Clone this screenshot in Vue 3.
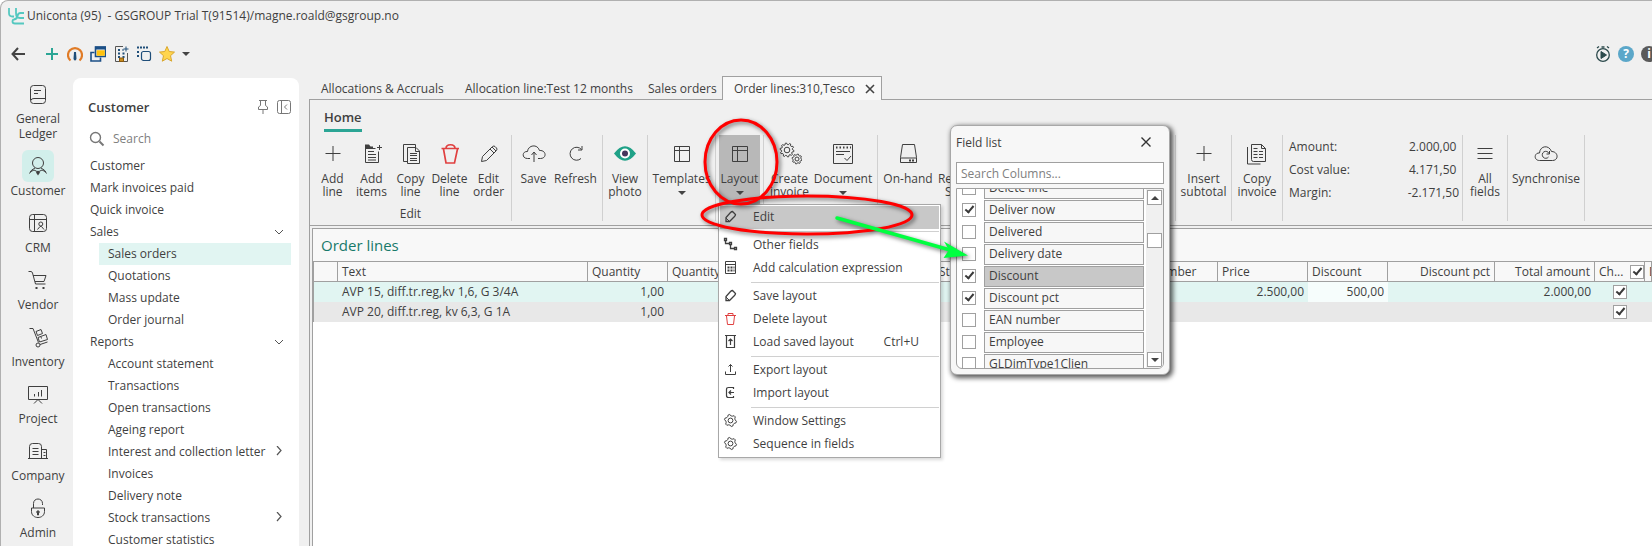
<script setup>
import { ref } from 'vue'

const gear = (cx, cy, r, teeth) => {
  const pts = []
  const n = teeth * 4
  for (let i = 0; i < n; i++) {
    const rad = i % 4 < 2 ? r : r - r * 0.22
    const a = ((i + 0.5) / n) * Math.PI * 2
    pts.push(`${(cx + rad * Math.cos(a)).toFixed(2)} ${(cy + rad * Math.sin(a)).toFixed(2)}`)
  }
  return `<path d="M${pts.join('L')}Z"/><circle cx="${cx}" cy="${cy}" r="${(r * 0.4).toFixed(1)}"/>`
}

const icons = {
  plus: '<path d="M4.500 12.500h15M12 5v15"/>',
  addItems: '<path d="M5.500 5v16.500h13V10.500M5.500 7.500h10M8 10.500h6M8 13.500h8M8 16.500h8M8 19h8M19.500 4v5M17 6.500h5"/><path d="M5 3.500h4l1.500 2H13v2.500H5z" fill="currentColor" stroke="none"/>',
  copy: '<path d="M16.500 6V3.500h-12v17H8M8.500 6.500h8.500l3.500 3.500v12.500h-12zM16.500 6.500v4h4M11 12.500h7M11 14.500h7M11 17.500h7M11 19.500h7"/>',
  trash: '<g stroke="#e04040" stroke-width="1.700"><path d="M3.500 7.500h17.500M8 7.500C8 2.500 17 2.500 17 7.500M5.500 8l2.500 14h8.500L19.500 8"/></g>',
  pencil: '<path d="M4.500 20.500l1-5L15.500 5.500q1.500-1 2.500 0l1.500 1.500q1 1 0 2.500L9.500 19.500zM13 8l4 4M15 6l4 4"/>',
  cloudUp: '<path d="M8 17.500H5.500C-.5 17.500 0 10 5.500 10.500C6 4 15.500 2.500 17.500 9.500C24.500 9 25 17.500 18.500 17.500H16M12 21V11.500M9.500 14L12 11l2.500 3"/>',
  refresh: '<path d="M17 17.500A6.500 6.500 0 1 1 17.500 8.500M18 5v4h-4"/>',
  eye: '<g stroke="none"><path d="M1 12.500Q12-2 23 12.500Q12 27 1 12.500z" fill="#1fa187"/><circle cx="12" cy="12.500" r="5" fill="#fff"/><circle cx="12" cy="12.500" r="3" fill="#46365c"/></g>',
  grid: '<path d="M4.500 5.500h15v15h-15zM4.500 9.500h15M9.500 5.500v15"/>',
  gears: gear(9, 9, 7, 10) + gear(19, 18, 5, 8),
  document: '<path d="M2.500 3.500h19v19h-19zM5 10.500h14M5 13.500h8M13.500 17l2.500 2.500 4-4.500"/><path d="M5 6.500h15" stroke-dasharray="1.500 2" stroke-width="2"/>',
  onHand: '<path d="M6.500 3.500h12l2 13v5h-16v-5zM4.500 17h16"/><path d="M13 19.500h5" stroke-width="2" stroke-dasharray="2 1"/>',
  copyInvoice: '<path d="M6.500 3.500h10l4 4v13h-12q-2 0-2-2zM16.500 3.500v4h4M2.500 6v17h13M8.500 7.500h4M8.500 10.500h4M8.500 13.500h4M14 10.500h4M8.500 16.500h4M14 13.500h4M14 16.500h4"/>',
  menu: '<path d="M4.500 7.500h15M4.500 12.500h15M4.500 17.500h15"/>',
  cloudSync: '<path d="M5.500 19.500C-.5 19.500 0 11.500 5.500 12C6 4.500 15 3.500 17.500 10.500C24.500 10.500 25 19.500 18.500 19.500zM14.500 16A3.500 3.500 0 1 1 15 12.500M15.500 10v3h-3"/>',
  ledger: '<path d="M7.500 3.500h9q3 0 3 3v12q0 3-3 3h-9q-3 0-3-3v-12q0-3 3-3zM5 18.500q0-2 3-2h11.500M8 8.500h7M8 11.500h4"/>',
  person: '<circle cx="12" cy="9" r="5.500"/><path d="M9 14Q5 15.500 3.500 19.500M15 14Q19 15.500 20.500 19.500M4 18l4-2 4 2 4-2 4 2"/><path d="M12 16.500l2 2-2 3-2-3z" fill="currentColor" stroke="none"/>',
  crm: '<rect x="3.500" y="3.500" width="17" height="17" rx="3"/><path d="M3.500 8.500h17M8.500 3.500v17M11.500 18.500l2.500-3h1.500l2.500 3"/><circle cx="14.800" cy="13" r="2"/>',
  cart: '<path d="M2.500 3.500h2.500q1 0 1.500 1.500l3 11h10M7 7.500h13l-2 6H9"/><path d="M9.500 19h2v2h-2zM16.500 19h2v2h-2z" fill="currentColor" stroke="none"/>',
  trolley: '<path d="M3.500 3.500H7l5.500 14M10 6.500l5-2 1.500 4-5 2zM12 12.500l8-3 1.500 5-8 2.500zM14 19.500l7.500-2.500M15 12l.5 1.500"/><circle cx="12" cy="20" r="2"/>',
  board: '<path d="M2.500 4.500h19v13h-19zM8 21.500l4-4 4 4M8.500 12v2.500M12.500 10v4.500M15.500 8v6.500"/>',
  company: '<path d="M3.500 19.500v-12q0-3 3-3h6q3 0 3 3v12M2 19.500h20M15.500 10.500h5v9M6.500 9.500h6M6.500 12.500h6M6.500 15.500h6M17.500 13.500h2M17.500 16.500h2"/>',
  lock: '<path d="M7.500 12V7.500C7.500 1.500 16.500 1.500 16.500 7.500V9M5.500 12h13v3.500C18.500 23.500 5.500 23.500 5.500 15.500z"/><path d="M12 14.500l1.500 1.500-1 1v2h-1v-2l-1-1z" fill="currentColor"/>'
}

const menuIcons = {
  eraser: '<path d="M4 13.500V9.500L8.500 4.500q1-1 2-1l3 3q0 1-1 2L7.500 13.500z" stroke-width="1.300"/><path d="M4 10l3.500 3.500"/>',
  nodes: '<path d="M2.500 2.500h2v2h-2zM7.500 6.500h2v2h-2zM12.500 11.500h2v2h-2zM3.500 4.500v3h4M8.500 8.500v4h4" stroke-width="1.300"/>',
  calc: '<path d="M3.500 2.500h10v12h-10zM3.500 5.500h10"/><path d="M5.500 8.500h7M5.500 11.500h7" stroke-dasharray="2 1" stroke-width="2"/>',
  bin: '<path stroke="#e04040" d="M3 5.500h11M6 5.500v-2h5v2M4.500 6l1 8.500h6l1-8.500"/>',
  load: '<path d="M3 2.500h11M4.500 2.500v12h8v-12M8.500 12V6M6.500 8l2-2 2 2" stroke-width="1.200"/>',
  exp: '<path d="M3.500 10.500v3h10v-3M8.500 11V3.500M6.500 5.500l2-2 2 2"/>',
  imp: '<path d="M11.500 5V3.500h-5q-2 0-2 2v6q0 2 2 2h5V12M12 8.500H7M9 6.500l-2 2 2 2" stroke-width="1.200"/>',
  cog: gear(8.5, 8.5, 6, 6)
}

const rail = [
  { label: 'General\nLedger', icon: 'ledger' },
  { label: 'Customer', icon: 'person', active: true },
  { label: 'CRM', icon: 'crm' },
  { label: 'Vendor', icon: 'cart' },
  { label: 'Inventory', icon: 'trolley' },
  { label: 'Project', icon: 'board' },
  { label: 'Company', icon: 'company' },
  { label: 'Admin', icon: 'lock' }
]

const nav = [
  { t: 'Customer' },
  { t: 'Mark invoices paid' },
  { t: 'Quick invoice' },
  { t: 'Sales', open: true },
  { t: 'Sales orders', sub: true, active: true },
  { t: 'Quotations', sub: true },
  { t: 'Mass update', sub: true },
  { t: 'Order journal', sub: true },
  { t: 'Reports', open: true },
  { t: 'Account statement', sub: true },
  { t: 'Transactions', sub: true },
  { t: 'Open transactions', sub: true },
  { t: 'Ageing report', sub: true },
  { t: 'Interest and collection letter', sub: true, more: true },
  { t: 'Invoices', sub: true },
  { t: 'Delivery note', sub: true },
  { t: 'Stock transactions', sub: true, more: true },
  { t: 'Customer statistics', sub: true }
]

const tabs = [
  { t: 'Allocations & Accruals', w: 144 },
  { t: 'Allocation line:Test 12 months', w: 183 },
  { t: 'Sales orders', w: 86 }
]

const groups = [
  {
    caption: 'Edit', items: [
      { t: 'Add\nline', icon: 'plus', w: 39 },
      { t: 'Add\nitems', icon: 'addItems', w: 39 },
      { t: 'Copy\nline', icon: 'copy', w: 39 },
      { t: 'Delete\nline', icon: 'trash', w: 39 },
      { t: 'Edit\norder', icon: 'pencil', w: 39 }
    ]
  },
  { items: [{ t: 'Save', icon: 'cloudUp', w: 37 }, { t: 'Refresh', icon: 'refresh', w: 47 }] },
  { items: [{ t: 'View\nphoto', icon: 'eye', w: 38 }] },
  { items: [{ t: 'Templates', icon: 'grid', w: 61, drop: true }] },
  { items: [{ t: 'Layout', icon: 'grid', w: 41, drop: true, active: true }] },
  { items: [{ t: 'Create\ninvoice', icon: 'gears', w: 45 }, { t: 'Document', icon: 'document', w: 62, drop: true }] },
  { items: [{ t: 'On-hand', icon: 'onHand', w: 54 }, { t: 'Reserve\nStock', icon: 'copy', w: 50 }, { t: 'Production', icon: 'gears', w: 187 }] },
  { items: [{ t: 'Insert\nsubtotal', icon: 'plus', w: 49 }] },
  { items: [{ t: 'Copy\ninvoice', icon: 'copyInvoice', w: 44 }] },
  { summary: [['Amount:', '2.000,00'], ['Cost value:', '4.171,50'], ['Margin:', '-2.171,50']] },
  { items: [{ t: 'All\nfields', icon: 'menu', w: 38 }] },
  { items: [{ t: 'Synchronise', icon: 'cloudSync', w: 70 }] }
]

const columns = [
  { t: '', w: 24 },
  { t: 'Text', w: 250 },
  { t: 'Quantity', w: 80 },
  { t: 'Quantity', w: 100 },
  { t: '', w: 167 },
  { t: 'Storage', w: 184 },
  { t: 'Item number', w: 99 },
  { t: 'Price', w: 90 },
  { t: 'Discount', w: 80 },
  { t: 'Discount pct', w: 107, r: true },
  { t: 'Total amount', w: 100, r: true },
  { t: 'Ch...', w: 50, check: true },
  { t: 'Date' }
]

const lines = ref([
  { text: 'AVP 15, diff.tr.reg,kv 1,6, G 3/4A', qty: '1,00', price: '2.500,00', disc: '500,00', total: '2.000,00', on: true },
  { text: 'AVP 20, diff.tr.reg, kv 6,3, G 1A', qty: '1,00', price: '', disc: '', total: '', on: true }
])
const allOn = ref(true)

const menu = [
  [{ t: 'Edit', icon: 'eraser', active: true }],
  [{ t: 'Other fields', icon: 'nodes' }, { t: 'Add calculation expression', icon: 'calc' }],
  [{ t: 'Save layout', icon: 'eraser' }, { t: 'Delete layout', icon: 'bin' }, { t: 'Load saved layout', icon: 'load', key: 'Ctrl+U' }],
  [{ t: 'Export layout', icon: 'exp' }, { t: 'Import layout', icon: 'imp' }],
  [{ t: 'Window Settings', icon: 'cog' }, { t: 'Sequence in fields', icon: 'cog' }]
]

const fields = ref([
  { t: 'Delete line', on: false },
  { t: 'Deliver now', on: true },
  { t: 'Delivered', on: false },
  { t: 'Delivery date', on: false },
  { t: 'Discount', on: true, active: true },
  { t: 'Discount pct', on: true },
  { t: 'EAN number', on: false },
  { t: 'Employee', on: false },
  { t: 'GLDimType1Clien', on: false }
])
</script>

<template>
  <div class="window">
    <header class="title">
      <svg width="17" height="17" viewBox="0 0 17 17" fill="none" stroke="#55c8c0" stroke-width="1.800">
        <path d="M1 0v5q0 3.500 3.500 3.500H6M8 0v5q0 5 4 5h4M16 5h-3.500Q10 5 9.500 8T6 11.500Q4.500 11.500 4.500 13.500T7 15.500h9" />
      </svg>
      <span>Uniconta (95)&nbsp; - GSGROUP Trial T(91514)/magne.roald@gsgroup.no</span>
    </header>

    <div class="toolbar">
      <button class="back" aria-label="Back"><svg width="14" height="14" fill="none" stroke="#444" stroke-width="2"><path d="M14 7H1.500M7 1L1.500 7 7 13" /></svg></button>
      <button aria-label="Add"><svg width="16" height="16" fill="none" stroke="#2ba595" stroke-width="2"><path d="M2 8h12M8 2v12" /></svg></button>
      <button aria-label="Dashboard"><svg width="16" height="16" fill="none"><path d="M3.500 14.500A7 7 0 1 1 12.500 14.500" stroke="#e07b26" stroke-width="2.200" /><path d="M7 6h2l.5 7q-1.500 3-3 0z" fill="#1f4e79" /></svg></button>
      <button aria-label="Windows"><svg width="16" height="16" fill="none" stroke="#1b4f86" stroke-width="1.600"><path d="M5.500 1h10v9.500h-10z" /><path d="M5 2h11" stroke-width="3" /><path d="M7.500 5h6.500v4H7.500z" fill="#ffc20e" stroke="#ffc20e" /><path d="M4.500 6.500H1V15h9.500v-3.500" /></svg></button>
      <button aria-label="Company"><svg width="16" height="16" fill="none" stroke="#1f4e79"><path d="M10 .5H2.500v15h12V7" stroke="#555" /><path d="M5 4h2M5 7.500h2M5 11h2M9.500 7.500h2M9.500 11h2M9.500 4h1" stroke-width="2" /><path d="M6.500 12h4v3.500h-4z" fill="#c98a1b" stroke="#8a5a10" /><path d="M13 .5v5M10.500 3h5" /></svg></button>
      <button aria-label="Duplicate"><svg width="16" height="16" fill="none" stroke="#1f4e79"><rect x="5.500" y="5.500" width="9" height="9" rx="2" stroke-width="1.200" /><path d="M1 1.500h11" stroke-width="2" stroke-dasharray="2 1" /><path d="M2 5v7" stroke-width="2" stroke-dasharray="2 2" /></svg></button>
      <button aria-label="Favourites"><svg width="16" height="16"><path d="M8 .5l2.200 5 5.300.6-4 3.600 1.200 5.500L8 12.500l-4.700 2.700 1.200-5.500-4-3.600 5.300-.6z" fill="#ffd54f" stroke="#d9a72e" /></svg></button>
      <button class="drop" aria-label="More favourites"><i class="caret"></i></button>
      <span class="grow"></span>
      <button aria-label="Timer"><svg width="16" height="16" fill="none" stroke="#2c4a4c"><circle cx="8" cy="9" r="6.300" stroke-width="1.300" /><path d="M6 5.500l5.500 3.500L6 12.500z" fill="#2c4a4c" /><path d="M2 2l2-1.500M14 2l-2-1.500M6.500 1h3" stroke-width="1.300" /></svg></button>
      <button class="round" aria-label="Help">?</button>
      <button class="round dark" aria-label="Information">i</button>
    </div>

    <div class="body">
      <nav class="rail">
        <a v-for="r in rail" :key="r.label" href="#" :class="{ on: r.active }">
          <span class="tile"><svg class="ic" viewBox="0 0 24 24" v-html="icons[r.icon]"></svg></span>
          <span class="lbl">{{ r.label }}</span>
        </a>
      </nav>

      <aside class="side">
        <div class="side-head">
          <h2>Customer</h2>
          <button aria-label="Pin"><svg width="14" height="16" fill="none" stroke="#777"><path d="M3 1.500h8M4.500 1.500v5L2.500 8v2.500h9V8l-2-1.500v-5M7 10.500V15" /></svg></button>
          <button aria-label="Collapse"><svg width="16" height="16" fill="none" stroke="#777"><rect x="1.500" y="1.500" width="13" height="13" rx="2" /><path d="M5.500 1.500v13M11 5.500L8.500 8l2.500 2.500" /></svg></button>
        </div>
        <label class="find">
          <svg width="16" height="16" fill="none" stroke="#777" stroke-width="1.400"><circle cx="6.500" cy="6.500" r="5" /><path d="M10.500 10.500l4 4" stroke-width="2" /></svg>
          <input type="text" placeholder="Search" aria-label="Search menu">
        </label>
        <ul>
          <li v-for="n in nav" :key="n.t">
            <a href="#" :class="{ sub: n.sub, on: n.active }">
              <span>{{ n.t }}</span>
              <svg v-if="n.open" width="10" height="10" fill="none" stroke="#555"><path d="M1 3l4 4 4-4" /></svg>
              <svg v-if="n.more" width="10" height="12" fill="none" stroke="#555" stroke-width="1.200"><path d="M3 0l4 4.500L3 9" /></svg>
            </a>
          </li>
        </ul>
      </aside>

      <main>
        <div class="tabs">
          <button v-for="t in tabs" :key="t.t" :style="{ width: t.w + 'px' }">{{ t.t }}</button>
          <button class="on"><span>Order lines:310,Tesco</span><svg width="10" height="10" fill="none" stroke="#444" stroke-width="1.600"><path d="M1 1l8 8M9 1L1 9" /></svg></button>
        </div>
        <div class="pane">
          <section class="ribbon">
            <div class="home"><button>Home</button></div>
            <div class="groups">
              <div v-for="(g, gi) in groups" :key="gi" class="group">
                <dl v-if="g.summary">
                  <div v-for="s in g.summary" :key="s[0]"><dt>{{ s[0] }}</dt><dd>{{ s[1] }}</dd></div>
                </dl>
                <div v-else class="items">
                  <button v-for="i in g.items" :key="i.t" :class="{ on: i.active }" :style="{ width: i.w + 'px' }">
                    <svg class="ic" viewBox="0 0 24 24" v-html="icons[i.icon]"></svg>
                    <span class="lbl">{{ i.t }}</span>
                    <i v-if="i.drop" class="caret"></i>
                  </button>
                </div>
                <p v-if="g.caption">{{ g.caption }}</p>
              </div>
            </div>
          </section>

          <section class="lines">
            <h1>Order lines</h1>
            <table>
              <colgroup><col v-for="(c, i) in columns" :key="i" :style="c.w ? { width: c.w + 'px' } : {}"></colgroup>
              <thead>
                <tr>
                  <th v-for="(c, i) in columns" :key="i" :class="{ r: c.r, chk: c.check }">
                    <label v-if="c.check">{{ c.t }}<input v-model="allOn" type="checkbox"></label>
                    <template v-else>{{ c.t }}</template>
                  </th>
                </tr>
              </thead>
              <tbody>
                <tr v-for="(l, i) in lines" :key="i">
                  <td></td><td>{{ l.text }}</td><td class="r">{{ l.qty }}</td><td></td><td></td><td></td><td></td>
                  <td class="r">{{ l.price }}</td><td class="r" :class="{ focus: i === 0 }">{{ l.disc }}</td><td></td>
                  <td class="r">{{ l.total }}</td>
                  <td class="c"><input v-model="l.on" type="checkbox" :aria-label="'Checked: ' + l.text"></td><td></td>
                </tr>
              </tbody>
            </table>
          </section>
        </div>
      </main>
    </div>

    <div class="menu" role="menu">
      <div v-for="(sec, si) in menu" :key="si" class="sec">
        <button v-for="m in sec" :key="m.t" role="menuitem" :class="{ on: m.active }">
          <svg class="mi" viewBox="0 0 17 17" v-html="menuIcons[m.icon]"></svg>
          <span>{{ m.t }}</span>
          <kbd v-if="m.key">{{ m.key }}</kbd>
        </button>
      </div>
    </div>

    <div class="dialog" role="dialog" aria-label="Field list">
      <div class="dlg-head">
        <span>Field list</span>
        <button aria-label="Close"><svg width="10" height="10" fill="none" stroke="#333" stroke-width="1.400"><path d="M.5 .5l9 9M9.500 .5l-9 9" /></svg></button>
      </div>
      <input class="cols" type="text" placeholder="Search Columns..." aria-label="Search columns">
      <div class="list">
        <div class="rows">
          <label v-for="f in fields" :key="f.t"><input v-model="f.on" type="checkbox"><span :class="{ on: f.active }">{{ f.t }}</span></label>
        </div>
        <div class="scroll">
          <button aria-label="Scroll up"><i class="caret up"></i></button>
          <span class="before"></span>
          <span class="thumb"></span>
          <span class="grow"></span>
          <button aria-label="Scroll down"><i class="caret"></i></button>
        </div>
      </div>
    </div>

    <svg class="marks" width="290" height="150" viewBox="690 110 290 150" fill="none" aria-hidden="true">
      <ellipse cx="741" cy="162" rx="36" ry="42" stroke="#f00" stroke-width="3" />
      <ellipse cx="807" cy="215" rx="105" ry="19" stroke="#f00" stroke-width="3" />
      <path d="M837 218L950 250" stroke="#00ff40" stroke-width="3.500" stroke-linecap="round" />
      <path d="M968 255.500L944 241.500L949 250L943.500 258z" fill="#00ff40" />
    </svg>
  </div>
</template>

<style>
body { overflow: hidden; background: #fff; }
</style>

<style scoped>
.window {
  position: relative;
  display: flex;
  flex-direction: column;
  box-sizing: border-box;
  height: 100vh;
  overflow: hidden;
  border: 1px solid #b0b0b0;
  border-width: 1px 0 0 1px;
  border-radius: 8px 0 0 0;
  background: #f0f0f0;
  color: #3f3f3f;
  font: 12px/16px "Open Sans", "Noto Sans", sans-serif;
}
button, input { font: inherit; color: inherit; }
button { padding: 0; border: 0; background: none; }
a { color: inherit; text-decoration: none; }
h1, h2, p, ul, dl, dd { margin: 0; padding: 0; }
ul { list-style: none; }
.grow { flex: 1; }
.lbl { white-space: pre; text-align: center; }
.ic { display: block; width: 24px; height: 24px; fill: none; stroke: currentColor; flex: none; }
.caret { display: block; width: 0; height: 0; border: 4px solid transparent; border-top-color: #444; border-bottom: 0; }
.caret.up { border-top: 0; border-bottom: 4px solid #444; }

input[type="checkbox"] {
  appearance: none;
  position: relative;
  box-sizing: border-box;
  flex: none;
  width: 14px;
  height: 14px;
  margin: 0;
  border: 1px solid #a0a0a0;
  background: #fff;
}
input[type="checkbox"]:checked::before {
  content: "";
  position: absolute;
  left: 4px;
  top: 0;
  width: 3px;
  height: 7px;
  border: solid #3a3a3a;
  border-width: 0 2px 2px 0;
  transform: rotate(40deg);
}

.title { display: flex; align-items: center; gap: 2px; height: 30px; padding-left: 7px; flex: none; }
.toolbar { display: flex; align-items: center; gap: 7px; height: 22px; margin: 12px 0 13px; padding-left: 10px; flex: none; overflow: hidden; }
.toolbar button { flex: none; }
.toolbar svg { display: block; }
.toolbar .back { margin-right: 12px; }
.toolbar .round { width: 16px; height: 16px; border-radius: 50%; background: #5ba7c9; color: #fff; font-weight: 700; line-height: 16px; }
.toolbar .dark { margin-right: -5px; background: #5a5a5a; }

.body { display: flex; flex: 1; min-height: 0; }
.rail { display: flex; flex-direction: column; gap: 10px; width: 74px; flex: none; }
.rail a { display: flex; flex-direction: column; align-items: center; line-height: 15px; }
.rail .lbl { padding-top: 1px; margin-bottom: -1px; }
.tile { display: flex; align-items: center; justify-content: center; width: 32px; height: 32px; border-radius: 6px; }
.on .tile { background: #d2efeb; }
.side { width: 226px; margin-left: -2px; border-radius: 8px 8px 0 0; background: #fff; flex: none; overflow: hidden; }
.side-head { display: flex; align-items: center; gap: 6px; height: 20px; padding: 19px 7px 0 15px; }
.side-head h2 { flex: 1; font-size: 13px; font-weight: 600; }
.side-head svg { display: block; }
.find { display: flex; align-items: center; gap: 8px; height: 22px; padding: 11px 16px 5px; }
.find input { width: 150px; padding: 0; border: 0; outline: 0; background: none; }
::placeholder { color: #808080; opacity: 1; }
.side a { display: flex; align-items: center; justify-content: space-between; height: 22px; margin-right: 8px; padding: 0 7px 0 17px; white-space: nowrap; }
.side a.sub { margin-left: 26px; padding-left: 9px; }
.side a.on { background: #e1f5f2; }

main { display: flex; flex-direction: column; flex: 1; min-width: 0; margin-left: 10px; }
.tabs { display: flex; height: 21px; flex: none; }
.tabs button { padding: 0 0 0 12px; white-space: nowrap; text-align: left; flex: none; }
.tabs .on { display: flex; align-items: center; justify-content: space-between; box-sizing: border-box; width: 160px; height: 24px; margin: -2px 0 0; padding: 0 6px 0 11px; border: 1px solid #a0a0a0; border-bottom: 0; background: #f8f8f8; z-index: 1; }
.pane { display: flex; flex-direction: column; flex: 1; min-height: 0; border: 1px solid #a0a0a0; border-width: 1px 0 0 1px; overflow: hidden; }
.ribbon { border-bottom: 1px solid #a0a0a0; flex: none; }
.home { height: 35px; padding-left: 14px; }
.home button { margin-top: 7px; padding-bottom: 2px; border-bottom: 3px solid #2ba595; font-size: 13px; font-weight: 600; line-height: 20px; }
.groups { display: flex; height: 86px; padding-bottom: 4px; }
.group { display: flex; flex-direction: column; justify-content: space-between; padding: 0 3px; border-right: 1px solid #d0d0d0; flex: none; }
.items { display: flex; }
.items button { display: flex; flex-direction: column; align-items: center; height: 69px; padding-top: 6px; line-height: 13px; }
.items .lbl { margin-top: 7px; }
.items .caret { margin-top: 6px; }
.items .on { background: #b8b8b8; }
.group p { text-align: center; line-height: 14px; }
.group dl div { display: flex; width: 173px; height: 23px; align-items: center; }
.group dt { width: 120px; padding-left: 3px; }

.lines { flex: 1; margin: 2px 0 0 2px; border: 1px solid #a0a0a0; border-width: 1px 0 0 1px; background: #fff; overflow: hidden; }
.lines h1 { padding-left: 8px; background: #f8f8f8; color: #177a6a; font-size: 15px; font-weight: 400; line-height: 32px; }
table { width: 100%; border-collapse: separate; border-spacing: 0; table-layout: fixed; border-left: 1px solid #a0a0a0; }
th, td { box-sizing: border-box; height: 20px; padding: 0 4px; font-weight: 400; line-height: 18px; text-align: left; white-space: nowrap; overflow: hidden; }
th { height: 21px; border: solid #a0a0a0; border-width: 1px 1px 1px 0; background: #f8f8f8; }
.r { text-align: right; }
.chk { padding-right: 0; }
.chk label { display: flex; align-items: center; justify-content: space-between; }
.c { text-align: center; }
.c input { display: block; margin: 0 auto; }
tbody tr:nth-child(1) { background: #e1f5f2; }
tbody tr:nth-child(2) { background: #e8e8e8; }
.focus { background: #f6fdfc; }

.menu { position: absolute; left: 717px; top: 203px; box-sizing: border-box; width: 223px; padding: 1px; border: 1px solid #a8a8a8; background: #fff; box-shadow: 2px 2px 3px rgba(0, 0, 0, .15); }
.sec + .sec { padding-top: 5px; background: linear-gradient(#d0d0d0, #d0d0d0) 31px 2px / 100% 1px no-repeat; }
.menu button { display: flex; align-items: center; width: 100%; height: 23px; padding: 0 20px 2px 2px; white-space: nowrap; }
.menu .on { background: #c8c8c8; }
.mi { width: 17px; height: 17px; margin-right: 14px; fill: none; stroke: #3f3f3f; flex: none; }
.menu kbd { margin-left: auto; font: inherit; }

.dialog { position: absolute; left: 949px; top: 124px; box-sizing: border-box; width: 220px; padding: 0 5px 5px; border: 1px solid #a8a8a8; border-radius: 7px; background: #f7f7f7; box-shadow: 2px 2px 5px 1px rgba(0, 0, 0, .65); }
.dlg-head { display: flex; align-items: center; justify-content: space-between; height: 34px; padding: 0 13px 2px 0; }
.cols { display: block; box-sizing: border-box; width: 100%; height: 22px; padding: 0 4px; border: 1px solid #a0a0a0; border-radius: 0; background: #fff; }
.list { display: flex; height: 179px; margin-top: 4px; border: 1px solid #a0a0a0; border-radius: 0 0 6px 6px; background: #fff; overflow: hidden; }
.rows { flex: 1; margin-top: -12px; }
.rows label { display: flex; align-items: center; gap: 8px; height: 22px; padding: 0 2px 0 5px; }
.rows span { flex: 1; box-sizing: border-box; height: 21px; padding-left: 4px; border: 1px solid #a0a0a0; background: #f7f7f7; line-height: 18px; }
.rows .on { background: #c8c8c8; }
.scroll { display: flex; flex-direction: column; width: 15px; padding: 1px; background: #f0f0f0; }
.scroll button, .thumb { display: flex; align-items: center; justify-content: center; box-sizing: border-box; height: 15px; border: 1px solid #a0a0a0; background: #fff; flex: none; }
.scroll .before { height: 28px; }

.marks { position: absolute; left: 689px; top: 109px; pointer-events: none; filter: drop-shadow(2px 2px 2px rgba(0, 0, 0, .55)); }
</style>
